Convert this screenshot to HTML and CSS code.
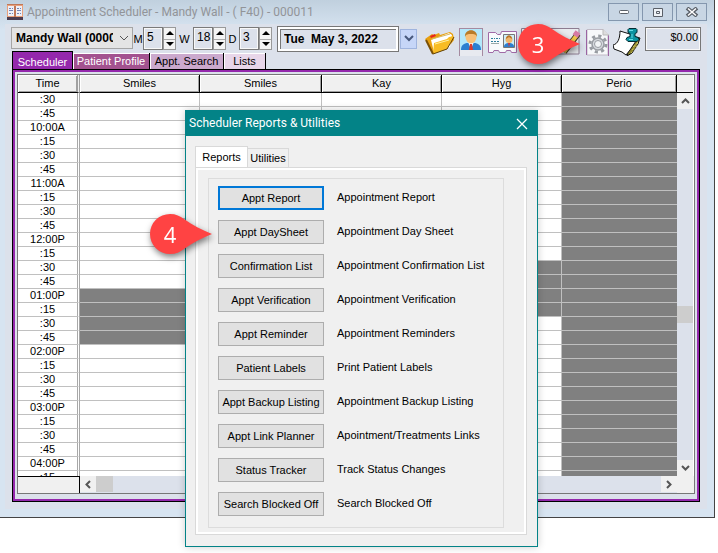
FILE: index.html
```html
<!DOCTYPE html>
<html lang="en">
<head>
<meta charset="utf-8">
<title>Appointment Scheduler</title>
<link rel="stylesheet" href="styles.css">
</head>
<body>
<main class="app">
  <header class="titlebar">
    <svg class="app-icon" width="16" height="16" viewBox="0 0 16 16"><rect width="16" height="16" fill="#e8a07c"/><rect y="13" width="16" height="3" fill="#4a3c50"/><path d="M1 2h6v10H1zM9 2h6v10H9z" fill="#eef0f8"/><path d="M0 .5h16M7.500 2v11M8.500 2v11" stroke="#c07858"/><path d="M2 4.500h2M5 4.500h1M10 4.500h2M13 4.500h1M2 6.500h4M10 6.500h4M2 9.500h2M5 9.500h1M10 9.500h2M13 9.500h1" stroke="#7685b4"/></svg>
    <h1>Appointment Scheduler - Mandy Wall - ( F40) - 000011</h1>
    <div class="window-buttons">
      <button aria-label="Minimize"><svg width="12" height="8"><rect x="1.500" y="2.500" width="9" height="3" rx="1" fill="#fff" stroke="#5a6068"/></svg></button>
      <button aria-label="Restore"><svg width="12" height="9"><path d="M1.500 .5h9v8h-9zM4.500 3.500h3v2h-3z" fill="#eef2f6" stroke="#5a6068"/></svg></button>
      <button aria-label="Close"><svg width="14" height="10"><path d="M2 1l10 8M12 1L2 9" stroke="#5a6068" stroke-width="4"/><path d="M3 1.500l8 7M11 1.500l-8 7" stroke="#fff" stroke-width="1.500"/></svg></button>
    </div>
  </header>

  <div class="client">
    <div class="toolbar">
      <div class="patient-wrap">
        <select class="patient" aria-label="Patient"><option>Mandy Wall (000011)</option></select>
        <svg class="chevron" width="10" height="6"><path d="M1 1l4 4 4-4" fill="none" stroke="#555"/></svg>
      </div>
      <label class="unit" for="m">M</label>
      <div class="spin"><input id="m" value="5"><span><button aria-label="Months up"><svg width="8" height="4"><path d="M4 0l4 4H0z"/></svg></button><button aria-label="Months down"><svg width="8" height="4"><path d="M0 0h8L4 4z"/></svg></button></span></div>
      <label class="unit wide" for="w">W</label>
      <div class="spin"><input id="w" value="18"><span><button aria-label="Weeks up"><svg width="8" height="4"><path d="M4 0l4 4H0z"/></svg></button><button aria-label="Weeks down"><svg width="8" height="4"><path d="M0 0h8L4 4z"/></svg></button></span></div>
      <label class="unit mid" for="d">D</label>
      <div class="spin"><input id="d" value="3"><span><button aria-label="Days up"><svg width="8" height="4"><path d="M4 0l4 4H0z"/></svg></button><button aria-label="Days down"><svg width="8" height="4"><path d="M0 0h8L4 4z"/></svg></button></span></div>
      <input class="date" aria-label="Date" value="Tue  May 3, 2022">
      <button class="date-drop" aria-label="Pick a date"><svg width="10" height="8"><path d="M1 1l4 4 4-4" fill="none" stroke="#47587c" stroke-width="2"/></svg></button>
      <div class="tools">
        <button class="tool folder" aria-label="Open folder"><svg width="30" height="24" viewBox="0 0 30 24"><path d="M0 8l7-5 2 1 5-2 1 2 10-3 3 2 1 6-7 9-14 5z" fill="#e8a010"/><path d="M5 5l5-2 1 2-5 2z" fill="#e8261c"/><path d="M6 9L24 2l3 2-2 12-16 5z" fill="#fff"/><path d="M7 8l18-5" stroke="#d8b860"/><path d="M9 12l13-4 2-2 5-1-7 13-14 5z" fill="#f8bc24"/><path d="M10 13l14-4" stroke="#fff0a0"/><path d="M29 6l-7 12-14 5" fill="none" stroke="#604008"/><path d="M8 23L1 9" stroke="#7a5006" stroke-width="2"/></svg></button>
        <button class="tool" aria-label="Patient"><svg width="24" height="28" viewBox="0 0 24 28"><path d="M0 0h24v28H0z" fill="#e8eaf0"/><path d="M1 1h22v21H1z" fill="#b4e8fa"/><path d="M.5 0v28M0 .5h24M23.500 0v28" stroke="#a58aa0" fill="none"/><path d="M2 22c0-5 3-7 7-7h6c4 0 7 2 7 7z" fill="#2c7fd0"/><path d="M9 14h6l-3 7z" fill="#fff"/><path d="M11 16h2l1 6h-4z" fill="#dc3a2c"/><ellipse cx="12" cy="9" rx="5.500" ry="6.500" fill="#f8c178"/><path d="M6 9c-1-9 13-9 12 0-1-3-3-3-6-3S7 6 6 9z" fill="#b97c28"/></svg></button>
        <button class="tool card" aria-label="Insurance card"><svg width="29" height="23" viewBox="0 0 29 23"><path d="M.5 1.500h7l2 2h3l1-3h15v21h-5l-1-2h-4l-1 2h-6l-1-2H6l-1 2H.5z" fill="#f8fafc" stroke="#a06aa6"/><path d="M3 7.500h4m1 0h4M3 10.500h9" stroke="#2f7f9c" stroke-dasharray="2 1"/><path d="M3 12.500h8" stroke="#9aa"/><path d="M15.500 3.500h11v13h-11z" fill="#cfeefa" stroke="#777"/><path d="M16 16c0-3 2-4 5-4s5 1 5 4z" fill="#2c7fd0"/><path d="M20 12h2l-1 4z" fill="#d33"/><circle cx="21" cy="8.500" r="3.500" fill="#f0b56a"/><path d="M18 8c0-5 6-5 6 0l-3-2z" fill="#b97428"/></svg></button>
        <button class="tool edit" aria-label="Edit notes"><svg width="60" height="28" viewBox="0 0 60 28"><path d="M.5 26V.5H58V26z" fill="#e9ebef" stroke="#8d7c91"/><path d="M43 24L57 6" stroke="#403520" stroke-width="6"/><path d="M43 24L56 7" stroke="#f0c848" stroke-width="4"/><path d="M54 8l3-4" stroke="#d67aa4" stroke-width="6"/></svg></button>
        <button class="tool" aria-label="Reports and utilities"><svg width="23" height="27" viewBox="0 0 23 27"><path d="M1 .5h16l5 5V26H1z" fill="#f7f8fa" stroke="#c0bac6"/><path d="M.5 1v25M22.500 6v21" stroke="#9b64a2"/><path d="M17 0v6h6" fill="#ddd" stroke="#bbb"/><circle cx="12" cy="15" r="8" fill="none" stroke="#989ca2" stroke-width="3" stroke-dasharray="3.140 3.140"/><circle cx="12" cy="15" r="6" fill="#d6d9de" stroke="#989ca2" stroke-width="1.500"/><circle cx="12" cy="15" r="3.500" fill="#f2f4f6" stroke="#989ca2"/></svg></button>
        <button class="tool" aria-label="Pinned notes"><svg width="30" height="28" viewBox="0 0 30 28"><path d="M19 8l8 2-2 6-6 9-5 3z" fill="#8a8228" stroke="#111"/><path d="M7 3l13 4 3 6-6 9-4 5-4-3-8-3-1-4c5-1 7-7 7-14z" fill="#fff" stroke="#111"/><path d="M20 19l5-5M19 22l6-7M18 25l7-8" stroke="#e4da70" stroke-dasharray="1 1"/><path d="M16 .5h7l1 1v3l-2 1v3l3 1 1 2-2 2h-9l-2-2 1-2 3-1v-3l-2-1v-3z" fill="#0b93a0" stroke="#032c32"/><path d="M16 2.500h4M19 6v4M16 11.500h4" stroke="#62dce4"/></svg></button>
      </div>
      <output class="balance">$0.00</output>
    </div>

    <nav class="tabs">
      <button class="tab active">Scheduler</button><button class="tab profile">Patient Profile</button><button class="tab search">Appt. Search</button><button class="tab lists">Lists</button>
    </nav>

    <section class="frame">
      <div class="sheet">
        <div class="viewport">
          <table class="schedule">
            <colgroup><col class="c-time"><col class="c-mid"><col class="c-wide"><col class="c-mid"><col class="c-mid"><col></colgroup>
            <thead><tr><th>Time</th><th>Smiles</th><th>Smiles</th><th>Kay</th><th>Hyg</th><th>Perio</th></tr></thead>
            <tbody>
              <tr><th>:30</th><td></td><td></td><td></td><td></td><td class="off"></td></tr>
              <tr><th>:45</th><td></td><td></td><td></td><td></td><td class="off"></td></tr>
              <tr><th>10:00A</th><td></td><td></td><td></td><td></td><td class="off"></td></tr>
              <tr><th>:15</th><td></td><td></td><td></td><td></td><td class="off"></td></tr>
              <tr><th>:30</th><td></td><td></td><td></td><td></td><td class="off"></td></tr>
              <tr><th>:45</th><td></td><td></td><td></td><td></td><td class="off"></td></tr>
              <tr><th>11:00A</th><td></td><td></td><td></td><td></td><td class="off"></td></tr>
              <tr><th>:15</th><td></td><td></td><td></td><td></td><td class="off"></td></tr>
              <tr><th>:30</th><td></td><td></td><td></td><td></td><td class="off"></td></tr>
              <tr><th>:45</th><td></td><td></td><td></td><td></td><td class="off"></td></tr>
              <tr><th>12:00P</th><td></td><td></td><td></td><td></td><td class="off"></td></tr>
              <tr><th>:15</th><td></td><td></td><td></td><td></td><td class="off"></td></tr>
              <tr><th>:30</th><td></td><td></td><td></td><td class="off"></td><td class="off"></td></tr>
              <tr><th>:45</th><td></td><td></td><td></td><td class="off"></td><td class="off"></td></tr>
              <tr><th>01:00P</th><td class="off"></td><td></td><td></td><td class="off"></td><td class="off"></td></tr>
              <tr><th>:15</th><td class="off"></td><td></td><td></td><td class="off"></td><td class="off"></td></tr>
              <tr><th>:30</th><td class="off"></td><td></td><td></td><td></td><td class="off"></td></tr>
              <tr><th>:45</th><td class="off"></td><td></td><td></td><td></td><td class="off"></td></tr>
              <tr><th>02:00P</th><td></td><td></td><td></td><td></td><td class="off"></td></tr>
              <tr><th>:15</th><td></td><td></td><td></td><td></td><td class="off"></td></tr>
              <tr><th>:30</th><td></td><td></td><td></td><td></td><td class="off"></td></tr>
              <tr><th>:45</th><td></td><td></td><td></td><td></td><td class="off"></td></tr>
              <tr><th>03:00P</th><td></td><td></td><td></td><td></td><td class="off"></td></tr>
              <tr><th>:15</th><td></td><td></td><td></td><td></td><td class="off"></td></tr>
              <tr><th>:30</th><td></td><td></td><td></td><td></td><td class="off"></td></tr>
              <tr><th>:45</th><td></td><td></td><td></td><td></td><td class="off"></td></tr>
              <tr><th>04:00P</th><td></td><td></td><td></td><td></td><td class="off"></td></tr>
              <tr><th>:15</th><td></td><td></td><td></td><td></td><td class="off"></td></tr>
            </tbody>
          </table>
        </div>
        <div class="vscroll">
          <div class="vhead"></div>
          <button aria-label="Scroll up"><svg width="9" height="6"><path d="M1 5l3.500-3.500L8 5" fill="none" stroke="#555" stroke-width="2"/></svg></button>
          <div class="vtrack"><div class="vthumb"></div></div>
          <button aria-label="Scroll down"><svg width="9" height="6"><path d="M1 1l3.500 3.500L8 1" fill="none" stroke="#555" stroke-width="2"/></svg></button>
        </div>
        <div class="hscroll">
          <div class="hcorner"></div>
          <button aria-label="Scroll left"><svg width="6" height="9"><path d="M5 1L1.500 4.500 5 8" fill="none" stroke="#555" stroke-width="2"/></svg></button>
          <div class="hthumb"></div>
          <div class="htrack"></div>
          <button aria-label="Scroll right"><svg width="6" height="9"><path d="M1 1l3.500 3.500L1 8" fill="none" stroke="#555" stroke-width="2"/></svg></button>
        </div>
        <div class="corner"></div>
      </div>
    </section>
  </div>
</main>

<section class="dialog" role="dialog" aria-labelledby="dialog-title">
  <header class="dialog-title">
    <h2 id="dialog-title">Scheduler Reports &amp; Utilities</h2>
    <button aria-label="Close dialog"><svg width="12" height="12"><path d="M1 1l10 10M11 1L1 11" stroke="#fff" stroke-width="1.250"/></svg></button>
  </header>
  <div class="dialog-body">
    <nav class="dialog-tabs"><button class="current">Reports</button><button>Utilities</button></nav>
    <div class="page">
      <div class="group">
        <button id="r1" class="focused">Appt Report</button><label for="r1">Appointment Report</label>
        <button id="r2">Appt DaySheet</button><label for="r2">Appointment Day Sheet</label>
        <button id="r3">Confirmation List</button><label for="r3">Appointment Confirmation List</label>
        <button id="r4">Appt Verification</button><label for="r4">Appointment Verification</label>
        <button id="r5">Appt Reminder</button><label for="r5">Appointment Reminders</label>
        <button id="r6">Patient Labels</button><label for="r6">Print Patient Labels</label>
        <button id="r7">Appt Backup Listing</button><label for="r7">Appointment Backup Listing</label>
        <button id="r8">Appt Link Planner</button><label for="r8">Apointment/Treatments Links</label>
        <button id="r9">Status Tracker</button><label for="r9">Track Status Changes</label>
        <button id="r10">Search Blocked Off</button><label for="r10">Search Blocked Off</label>
      </div>
    </div>
  </div>
</section>

<div class="marker three"><svg width="64" height="42" viewBox="0 0 64 42"><path d="M20 0a20 20 0 1 0 0 40c6 0 10-2 14-5 8-6 18-11 28-15-10-4-20-9-28-15-4-3-8-5-14-5z" fill="#ff4343"/></svg><span>3</span></div>
<div class="marker four"><svg width="64" height="42" viewBox="0 0 64 42"><path d="M20 0a20 20 0 1 0 0 40c6 0 10-2 14-5 8-6 18-11 28-15-10-4-20-9-28-15-4-3-8-5-14-5z" fill="#ff4343"/></svg><span>4</span></div>
</body>
</html>
```

FILE: styles.css
```css
* { box-sizing: border-box; }
body {
  margin: 0;
  background: #fff;
  color: #000;
  font: 11px/14px "Liberation Sans", sans-serif;
}
button, input, select { font: inherit; color: inherit; margin: 0; padding: 0; border-radius: 0; }
button { display: flex; align-items: center; justify-content: center; border: 0; background: none; }
h1, h2 { margin: 0; font-weight: 400; }
svg { display: block; flex: none; }

/* main window */
.app {
  margin-right: 3px;
  padding: 0 7px 8px 5px;
  border: solid #444;
  border-width: 0 1px 1px 0;
  background: linear-gradient(#c0d0de, #d7e4f1 30px);
}
.titlebar { display: flex; height: 24px; }
.app-icon { margin: 4px 4px 0 2px; }
.titlebar h1 { flex: 1; font: 12px/24px Roboto, sans-serif; color: #929498; white-space: nowrap; }
.window-buttons { display: flex; gap: 3px; margin-top: 3px; }
.window-buttons button { width: 31px; height: 18px; border: 1px solid #8497ae; background: #c8d6e4; }

.client { padding: 2px 6px 7px 7px; background: #dce1eb; }

/* toolbar */
.toolbar { display: flex; align-items: flex-start; height: 27px; margin-left: -1px; }
.patient-wrap { position: relative; width: 122px; margin-top: 1px; }
.patient {
  appearance: none;
  display: block;
  width: 100%;
  height: 22px;
  padding: 0 19px 0 4px;
  border: 1px solid #a5a5a5;
  background: #e4e4e4;
  font: bold 12px/20px "Liberation Sans", sans-serif;
}
.chevron { position: absolute; right: 4px; top: 8px; }
.unit { width: 10px; line-height: 26px; text-align: center; }
.unit.mid { width: 13px; }
.unit.wide { width: 17px; }
.spin { display: flex; width: 33px; height: 23px; margin-top: 1px; }
.spin input { width: 20px; height: 23px; padding: 0 0 3px 3px; border: 1px solid #7a7a7a; background: #dce1eb; outline: 1px solid #f8f8f8; outline-offset: -2px; font-size: 12px; }
.spin span { display: grid; grid-template-rows: 1fr 1fr; width: 13px; border: 1px solid #999; background: #f4f4f4; }
.spin button + button { border-top: 1px solid #aaa; }
.date {
  width: 122px;
  height: 26px;
  margin: 0 1px 0 5px;
  padding: 0 6px;
  border: 1px solid #777;
  background: #dce1eb;
  box-shadow: inset 0 0 0 2px #fff, inset 3px 3px 0 #777;
  font: bold 12px/20px "Liberation Sans", sans-serif;
}
.date-drop { width: 17px; height: 20px; margin-top: 3px; border: 1px solid #9fb4de; background: #c6d6f8; }
.tools { display: flex; flex: 1; justify-content: space-between; padding: 2px 2px 0 8px; }
.folder, .card { margin-top: 3px; }
.tool { height: 28px; }
.tool.folder { height: 24px; }
.tool.card { height: 23px; }
.balance { display: block; width: 56px; height: 24px; margin-top: 1px; padding-right: 2px; border: 1px solid #777; outline: 1px solid #f8f8f8; outline-offset: -2px; line-height: 18px; text-align: right; }

/* section tabs */
.tabs { display: flex; align-items: flex-end; height: 18px; margin-top: -2px; }
.tab { height: 16px; border: solid #000; border-width: 0 1px 0 0; box-shadow: inset 1px 1px #fff; }
.tab.active { width: 61px; height: 18px; padding-top: 2px; border-width: 1px 1px 0; background: #9428ac; color: #fff; box-shadow: none; }
.tab.profile { width: 77px; background: #a3528f; color: #fff; }
.tab.search { width: 74px; background: #cba9cd; }
.tab.lists { width: 42px; background: #e8d6e9; }
.tabs, .frame { margin-right: 1px; }

/* schedule */
.frame { border: 1px solid #000; background: #dce1eb; outline: 2px solid #9428ac; outline-offset: -3px; padding: 4px; }
.sheet {
  display: grid;
  grid-template-columns: 1fr 17px;
  border: 1px solid #777;
  margin-bottom: 3px;
  background: #fff;
}
.viewport { height: 401px; overflow: hidden; }
.schedule { width: 100%; table-layout: fixed; border-collapse: separate; border-spacing: 0; }
.schedule th { padding: 0; font-weight: 400; text-align: center; }
.c-time { width: 62px; }
.c-wide { width: 122px; }
.c-mid { width: 120px; }
.schedule td { padding: 0; }
.schedule tbody th, .schedule td { height: 14px; line-height: 13px; border: solid #c0c0c0; border-width: 0 1px 1px 0; }
.schedule tbody th { border-right: 3px double #a8a8a8; }
.schedule td:last-child { border-right: 0; }
.schedule thead th { height: 18px; line-height: 17px; border: solid #000; border-width: 0 1px 1px 0; background: #f0f0f0; box-shadow: inset 1px 1px #fff, inset -1px -1px #a0a0a0; }
.schedule thead th:first-child { border-right: 3px double #a0a0a0; }
.schedule .off { background: #808080; }
.vscroll { display: flex; flex-direction: column; background: #dce1eb; border-right: 1px solid #fff; }
.vscroll button, .hscroll button { height: 16px; width: 16px; background: #f0f0f0; }
.vhead { height: 18px; border-bottom: 1px solid #000; background: #f0f0f0; }
.vtrack { display: flex; flex: 1; flex-direction: column; justify-content: flex-end; padding-bottom: 137px; }
.vthumb, .hthumb { width: 16px; height: 17px; background: #cdcdcd; }
.hscroll { display: flex; height: 17px; background: #dce1eb; }
.hcorner { width: 62px; border: solid #000; border-width: 1px 1px 0 0; background: #f0f0f0; }
.hthumb { width: 17px; height: 16px; }
.htrack { flex: 1; }
.corner { background: #f0f0f0; }

/* reports dialog */
.dialog {
  position: absolute;
  left: 185px;
  top: 110px;
  width: 353px;
  border: 1px solid #038387;
  background: #f0f0f0;
  box-shadow: 0 0 8px rgba(0, 0, 0, .2);
}
.dialog-title { display: flex; justify-content: space-between; height: 25px; padding: 0 9px 0 3px; background: #038387; color: #fff; }
.dialog-title h2 { font: 12px/24px Roboto, sans-serif; }
.dialog-body { padding: 10px 10px 11px 9px; }
.dialog-tabs { display: flex; align-items: flex-end; }
.dialog-tabs button { width: 41px; height: 19px; border: 1px solid #d9d9d9; border-width: 1px 1px 0 0; }
.dialog-tabs .current { width: 53px; height: 21px; border-left-width: 1px; background: #fff; }
.page { padding: 10px 22px 6px 12px; border: 1px solid #d9d9d9; box-shadow: inset 0 0 0 2px #fff; }
.group {
  display: grid;
  grid-template-columns: 106px 1fr;
  gap: 10px 13px;
  align-items: center;
  padding: 7px 9px 11px;
  border: 1px solid #dcdcdc;
}
.group button { height: 24px; border: 1px solid #adadad; background: #e1e1e1; white-space: nowrap; }
.group .focused { border: 2px solid #0078d7; }
.group label { padding-bottom: 2px; white-space: nowrap; }

/* numbered callouts */
.marker { position: absolute; width: 64px; height: 42px; color: #fff; filter: drop-shadow(1px 3px 3px rgba(0, 0, 0, .5)); }
.marker span { position: absolute; inset: 0 24px 2px 0; font: 22px/40px "Open Sans", sans-serif; text-align: center; }
.three { left: 518px; top: 24px; }
.four { left: 150px; top: 214px; }
```
